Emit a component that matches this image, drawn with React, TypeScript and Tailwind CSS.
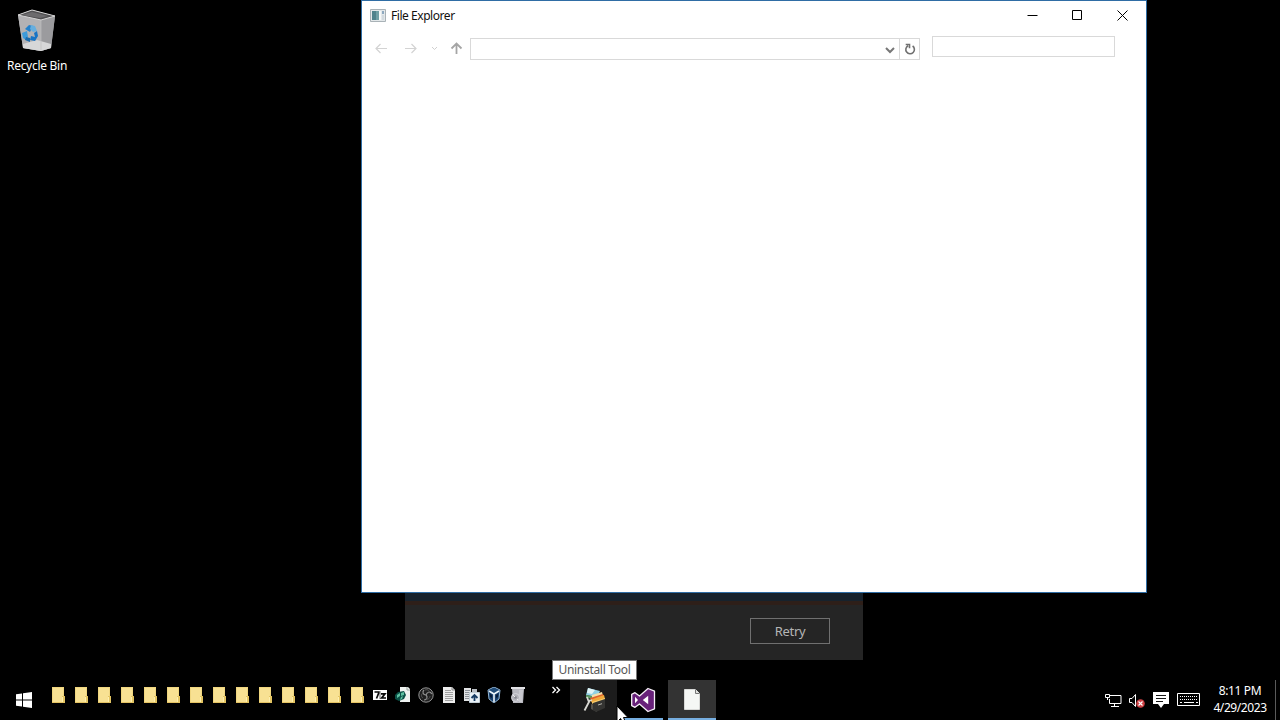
import type { ReactNode } from "react";

interface IconProps {
  children: ReactNode;
  size?: number;
  className?: string;
}

function Icon({ children, size = 16, className = "" }: IconProps) {
  return (
    <svg width={size} height={size} viewBox={`0 0 ${size} ${size}`} fill="none" className={`shrink-0 ${className}`}>
      {children}
    </svg>
  );
}

function RecycleBin() {
  return (
    <div className="absolute top-2 left-0 flex w-[74px] flex-col items-center">
      <svg width="40" height="44" viewBox="0 0 40 44" fill="none">
        <path d="M1 7 15 2 38 8 34 40 24 43 6 40Z" fill="#a4a4a6" />
        <path d="M1 7 24 12 24 43 6 40Z" fill="#b3b2b4" />
        <path d="M24 12 38 8 34 40 24 43Z" fill="#9b9b9e" />
        <path d="M6 36 20 32 34 36 34 40 24 43 6 40Z" fill="#d7d7d8" />
        <path d="M1 7 15 2 38 8 24 12Z" fill="#515052" stroke="#d5d5d5" strokeWidth="1" />
        <path d="m5 7 10-3 16 4-8 2Z" fill="#6c6b6d" />
        <path d="M24 12v30" stroke="#bdbdbe" strokeWidth=".7" />
        <path d="m8 21 4-4 4 1-3 6Z" fill="#2280cb" />
        <path d="m14 17 4 1 2 5-4 1-3-3Z" fill="#66aede" />
        <path d="m5 25 5-2 1 6-2 3-3-2Z" fill="#3e9bda" />
        <path d="m17 25 3-2 1 5-3 5-5-1 1-4 4 1Z" fill="#1674c6" />
        <path d="m9 29 4 1v4l-5-2Z" fill="#196aac" />
      </svg>
      <span className="mt-[5px] text-[12px] leading-[18px] tracking-[-0.28px] whitespace-nowrap text-white">Recycle Bin</span>
    </div>
  );
}

function TitleBar() {
  return (
    <div className="flex h-[30px] items-center pl-2">
      <svg width="16" height="14" viewBox="0 0 16 14" className="-mt-px">
        <path d="M.5.5h15v12H.5Z" fill="#e3e8ea" stroke="#a9b2b7" />
        <path d="M2 2h7v9H2Z" fill="#6f9fa5" />
        <path d="M2 2h4v9H2Z" fill="#4f828c" />
        <path d="M9 2h2v9H9Z" fill="#f6f8f8" />
        <path d="M12 2h2v3h-2Z" fill="#8ea9c0" />
        <path d="M12 6h2v5h-2Z" fill="#d3dadf" />
      </svg>
      <span className="ml-[5px] text-[12px] leading-4 tracking-[-0.45px] whitespace-nowrap text-[#111]">File Explorer</span>
      <div className="-mt-px mr-px ml-auto flex">
        <button className="grid h-[30px] w-[44px] place-items-center">
          <Icon size={11}><path d="M.5 5.5h10" stroke="#000" /></Icon>
        </button>
        <button className="grid h-[30px] w-[46px] place-items-center">
          <Icon size={11}><path d="M.5.5h9v9h-9Z" stroke="#000" /></Icon>
        </button>
        <button className="grid h-[30px] w-[45px] place-items-center">
          <Icon size={11}><path d="m.5.5 10 10m0-10-10 10" stroke="#000" /></Icon>
        </button>
      </div>
    </div>
  );
}

function AddressBar() {
  return (
    <div className="flex h-[30px] items-start pt-[5px] pl-[13px]">
      <Icon size={13} className="mt-[6px]"><path d="M1 6.5h11M5.5 2 1 6.5 5.5 11" stroke="#d3d3d3" strokeWidth="1.2" /></Icon>
      <Icon size={13} className="mt-[6px] ml-4"><path d="M1 6.5h11M7.5 2 12 6.5 7.5 11" stroke="#d3d3d3" strokeWidth="1.2" /></Icon>
      <Icon size={7} className="mt-[9px] ml-[14px]"><path d="m1 2 2.5 2.5L6 2" stroke="#d0d0d0" /></Icon>
      <Icon size={13} className="mt-[6px] ml-[12px]"><path d="M6.5 12V1.5M1.5 6.5l5-5 5 5" stroke="#a5a5a5" strokeWidth="1.8" /></Icon>
      <div className="mt-[2px] ml-[7px] flex h-[22px] w-[450px] border border-[#d9d9d9]">
        <div className="ml-auto grid w-[20px] place-items-center">
          <Icon size={10} className="mt-[2px] ml-px"><path d="m1 3 4 4 4-4" stroke="#777" strokeWidth="2" /></Icon>
        </div>
        <div className="grid w-[20px] place-items-center border-l border-[#d9d9d9]">
          <Icon size={12}>
            <path d="M8.6 3a4.3 4.3 0 1 1-4.5-.3M1.7 1.5h3.8v3.8" stroke="#707070" strokeWidth="1.6" />
          </Icon>
        </div>
      </div>
      <div className="ml-3 h-[21px] w-[183px] border border-[#d9d9d9]" />
    </div>
  );
}

function Folder() {
  return (
    <Icon>
      <path d="M2 0h12v16H2Z" fill="#f0d67f" />
      <path d="M3 1h10v14H3Z" fill="#f8e193" />
      <path d="M2 15h12v1H2Z" fill="#e5c363" />
      <path d="M12 9h3v7h-3Z" fill="#e3c462" />
      <path d="M12 10h1v5h-1Z" fill="#fff0af" />
    </Icon>
  );
}

function SevenZip() {
  return (
    <Icon>
      <path d="M1 3h14v10H1Z" fill="#fff" />
      <path d="M2.5 5h4.2v1L4.5 11.5M9 6.8h4L9.7 11H14" stroke="#0a0a0a" strokeWidth="1.7" />
      <path d="M8 4v8" stroke="#0a0a0a" strokeWidth=".6" />
    </Icon>
  );
}

function RegistryDoc() {
  return (
    <Icon>
      <path d="M5 0h8l2 2v13H5Z" fill="#eef2f0" />
      <path d="M12 0v3h3" stroke="#9aa5a1" />
      <path d="m0 8 3-3 6-1 2 4-2 4-5 2-4-2Z" fill="#0b5146" />
      <path d="m2 8 3-2v3l-3 2Zm4-2 3-1v3l-3 1Zm0 4 2-1-1 3-2 1Z" fill="#5dc0a1" />
    </Icon>
  );
}

function Obs() {
  return (
    <Icon>
      <circle cx="8" cy="8" r="7.2" fill="#1f1f1f" stroke="#949494" />
      <path d="M8 8C5 8 4 5 6 3m2 5c1-3 4-4 6-1M8 8c2 2 1 5-2 5" stroke="#8f8f8f" strokeWidth="1.2" />
      <path d="M5 6c-2 1-2 4 0 5m2-8c3-1 5 1 4 3m1 3c0 2-2 4-4 3" stroke="#555" />
    </Icon>
  );
}

function TextDoc() {
  return (
    <Icon>
      <path d="M2 0h9l3 3v13H2Z" fill="#ededed" />
      <path d="M11 0v3h3" stroke="#888" />
      <path d="M4 3.5h6M4 5.5h8M4 7.5h8M4 9.5h8M4 11.5h8M4 13.5h8" stroke="#a0a0a0" />
    </Icon>
  );
}

function UploadDocs() {
  return (
    <Icon>
      <path d="M0 1h7v13H0Z" fill="#e1e3e5" />
      <path d="M1 3.5h5M1 5.5h5M1 7.5h4M1 9.5h4M1 11.5h4" stroke="#8a9097" />
      <path d="M8 2h5v4H8Z" fill="#b9bec4" />
      <path d="M5.5 5.5h10v10h-10Z" fill="#e9f1f7" stroke="#c3ced6" />
      <path d="M10.5 14V8m-3 3 3-3 3 3" stroke="#173c64" strokeWidth="1.8" />
    </Icon>
  );
}

function VirtualBox() {
  return (
    <Icon className="-ml-px mr-px">
      <path d="m8 0 6 3-1 9-5 4-5-4-1-9Z" fill="#173e6b" stroke="#92b5d4" />
      <path d="m3 3 5 3 5-3-5-2Z" fill="#204c78" />
      <path d="m3 4 5 3 5-3M8 7v8" stroke="#edf6fb" strokeWidth="1.6" />
      <path d="m4 7 2 1v3l-2-1Zm8 0-2 1v3l2-1Z" fill="#061b35" />
    </Icon>
  );
}

function Uninstaller() {
  return (
    <Icon>
      <path d="M2 1h12v1l-1 14H3Z" fill="#b9b9c0" />
      <path d="M1 0h14v2H1Z" fill="#e1e1e5" />
      <path d="M9 3h4l-1 12H9Z" fill="#c9c9cf" />
      <circle cx="5.5" cy="10.5" r="4" fill="#b4b4bb" stroke="#d6d6dc" />
      <circle cx="5.5" cy="10.5" r="1.3" fill="#85868e" />
      <path d="m3 8 2 2m2 2 1 1" stroke="#eee" />
    </Icon>
  );
}

function ToolboxIcon() {
  return (
    <Icon size={24}>
      <path d="m6 0 12 3-3 6L4 7Z" fill="#8fd0e4" />
      <path d="m6 0 7 2-3 4-5-1Z" fill="#e2f4f6" />
      <path d="m4 7 11 2-1 2-10-1Z" fill="#5c9a62" />
      <path d="m10 7 10-3 1 4-11 4Z" fill="#f3dfaa" />
      <path d="m8 10 13-4 1 3-12 5Z" fill="#e0602c" />
      <path d="m8 12 14-5 1 4-12 5Z" fill="#f0a83a" />
      <path d="m10 14 13-4v2l-12 5Z" fill="#f7cf70" />
      <path d="m9 16 6 2v6l-6-3Z" fill="#55534e" />
      <path d="m11 15 12-4v9l-9 4-3-2Z" fill="#343432" />
      <path d="m16 17 4-1.3" stroke="#b2b0a8" />
      <path d="M2.5 22.5 8 12M5 9l1.5 4L10 12" stroke="#d8d8d2" strokeWidth="1.8" />
    </Icon>
  );
}

function VisualStudio() {
  return (
    <Icon size={26}>
      <path
        d="m18 1.5 6.5 2.7v17.6L18 24.5 9.5 17 5 20.3l-3.3-1.6V7.3L5 5.7 9.5 9Z"
        fill="#68217a"
        stroke="#f6f0f7"
        strokeWidth="1.3"
        strokeLinejoin="round"
      />
      <path d="M18.2 8.8v8.4L12.8 13ZM5 9.8v6.4L8 13Z" fill="#fff" />
    </Icon>
  );
}

function BlankDoc() {
  return (
    <Icon size={24}>
      <path d="M4.5 1.5h11l4 4v16h-15Z" fill="#f5f7f5" stroke="#d8d9d7" />
      <path d="M15.5 1.5v4h4" fill="#dfe1df" stroke="#777" />
    </Icon>
  );
}

function WindowsLogo() {
  return (
    <Icon>
      <path d="M0 2.3 6 1.4v6.1H0ZM7 1.2 16 0v7.5H7ZM0 8.5h6v6.1l-6-.9ZM7 8.5h9V16l-9-1.2Z" fill="#fff" />
    </Icon>
  );
}

function Tray() {
  return (
    <div className="ml-auto flex h-full items-start">
      <Icon size={17} className="mt-3">
        <path d="M5 3.5h11v8H4.5V7M9.5 12v3M6 14.5h8" stroke="#fff" />
        <path d="M.5 2.5h4v3h-4ZM2.5 5.5V8" stroke="#fff" />
      </Icon>
      <Icon size={17} className="mt-3 ml-[6px]">
        <path d="M1.5 6.5H4l3.5-4v12L4 10.5H1.5Z" stroke="#fff" />
        <circle cx="12.5" cy="11.5" r="4.3" fill="#ce4145" />
        <path d="m10.5 9.5 4 4m0-4-4 4" stroke="#fff" strokeWidth="1.1" />
      </Icon>
      <Icon size={17} className="mt-3 ml-2">
        <path d="M0 0h16v12h-5l-3 4-3-4H0Z" fill="#fff" />
        <path d="M3 3.5h10M3 6.5h10M3 9.5h7" stroke="#161616" />
      </Icon>
      <svg width="24" height="14" viewBox="0 0 24 14" fill="none" className="mt-[13px] ml-[7px]">
        <path d="M.5.5h22v12H.5Z" stroke="#fff" />
        <path d="M3 3.5h18M3 6.5h18" stroke="#fff" strokeDasharray="1 1" />
        <path d="M3 9.5h2m2 0h10m2 0h2" stroke="#fff" />
      </svg>
      <div className="ml-3 flex w-[54px] flex-col items-center pt-[2px] text-[12px] leading-[17px] whitespace-nowrap text-white">
        <span className="tracking-[-0.35px]">8:11 PM</span>
        <span className="tracking-[-0.42px]">4/29/2023</span>
      </div>
      <div className="ml-[8px] h-full w-px bg-[#5a5a5a]" />
      <div className="w-[4px]" />
    </div>
  );
}

const shortcuts = [SevenZip, RegistryDoc, Obs, TextDoc, UploadDocs, VirtualBox, Uninstaller];

function Taskbar() {
  return (
    <div className="absolute inset-x-0 bottom-0 flex h-10 bg-black">
      <button className="flex w-[50px] shrink-0 items-start pt-3 pl-4"><WindowsLogo /></button>
      <div className="flex w-[502px] shrink-0 gap-[7px] pt-[7px]">
        {Array.from({ length: 14 }, (_, i) => <Folder key={i} />)}
        {shortcuts.map((Shortcut, i) => <Shortcut key={i} />)}
      </div>
      <svg width="18" height="8" viewBox="0 0 18 8" fill="none" className="mt-[6px] shrink-0">
        <path d="m.5 1 3 3-3 3m4-6 3 3-3 3" stroke="#fff" strokeWidth="1.3" />
      </svg>
      <div className="grid h-10 w-[47px] place-items-center bg-[#1c1c1c] pl-px"><ToolboxIcon /></div>
      <div className="ml-[2px] flex h-10 w-[48px] flex-col items-center">
        <div className="mt-[7px]"><VisualStudio /></div>
        <div className="mt-auto mr-[4px] h-[2px] w-[40px] self-end bg-[#76aee0]" />
      </div>
      <div className="ml-px flex h-10 w-[48px] flex-col items-center bg-[#333]">
        <div className="mt-2"><BlankDoc /></div>
        <div className="mt-auto h-[2px] w-full bg-[#76aee0]" />
      </div>
      <Tray />
    </div>
  );
}

export default function App() {
  return (
    <div className="relative h-[720px] w-[1280px] cursor-default overflow-hidden bg-black font-['Noto_Sans','Open_Sans',sans-serif]">
      <RecycleBin />
      <div className="absolute top-[590px] left-[405px] flex h-[70px] w-[458px] flex-col bg-[#252525]">
        <div className="mt-[3px] h-[8px] shrink-0 bg-[#17222c]" />
        <div className="h-[4px] shrink-0 bg-[#2e1f19]" />
        <button className="mt-[13px] mr-[33px] ml-auto h-[26px] w-[80px] border border-[#707070] text-[13px] leading-6 tracking-[-0.3px] text-[#b5b5b5]">Retry</button>
      </div>
      <div className="absolute top-0 left-[361px] h-[593px] w-[786px] border border-[#2f6da5] bg-white">
        <TitleBar />
        <AddressBar />
      </div>
      <Taskbar />
      <div className="absolute top-[660px] left-[552px] flex h-[20px] w-[85px] items-center justify-center border border-[#777] bg-white text-[12px] leading-[18px] tracking-[-0.3px] whitespace-nowrap text-[#575757]">
        Uninstall Tool
      </div>
      <svg width="13" height="20" viewBox="0 0 13 20" className="absolute top-[705px] left-[616px]">
        <path d="M1 1v16l3.6-3.5L7 19l3-1-2.5-5.5H12Z" fill="#fff" stroke="#000" />
      </svg>
    </div>
  );
}
